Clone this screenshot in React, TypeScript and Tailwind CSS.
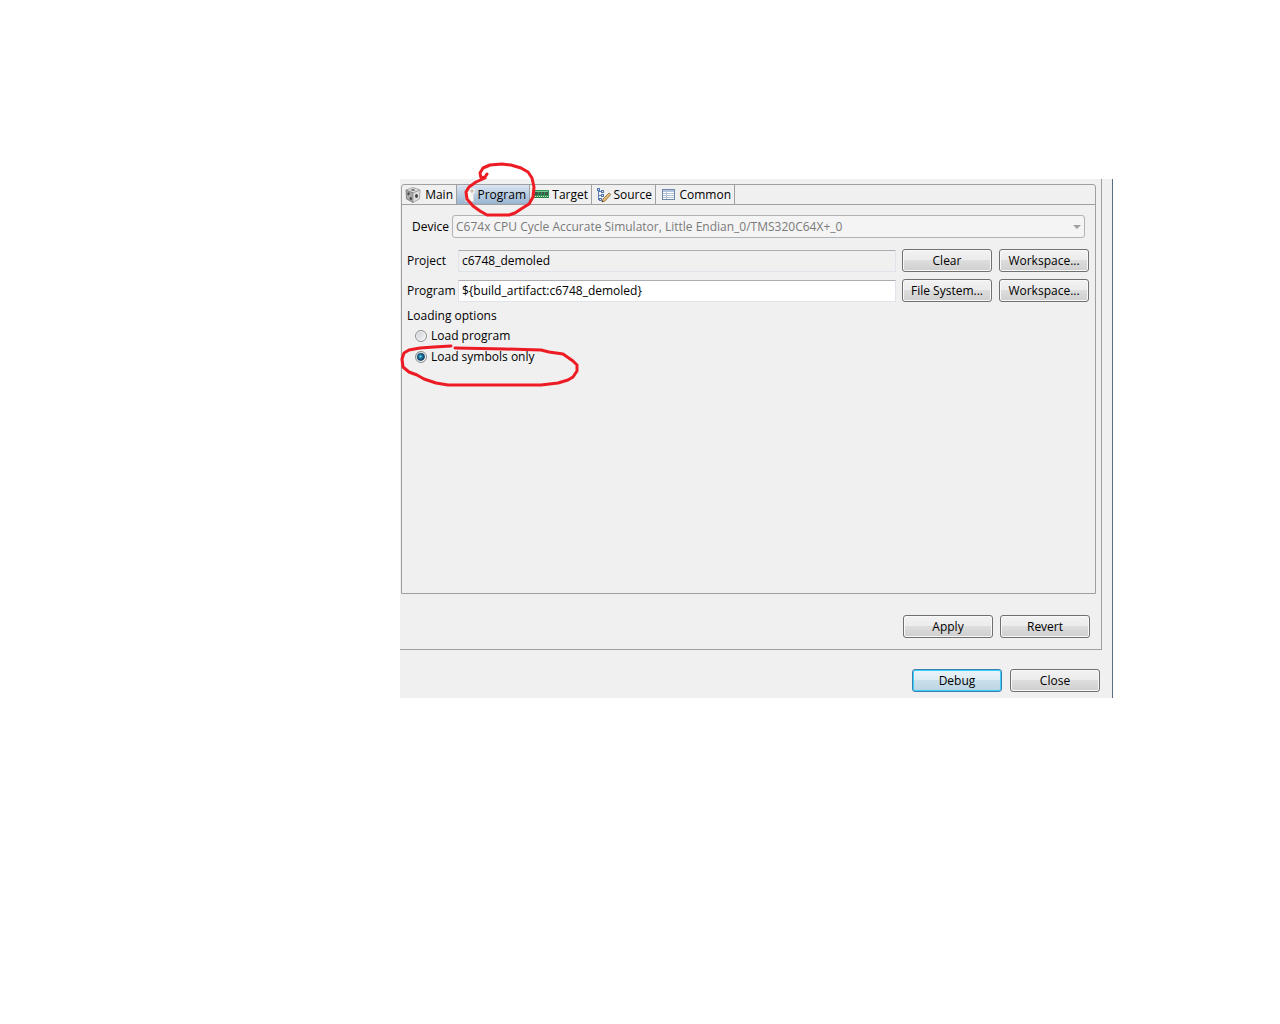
import React, { useState } from 'react';
import clsx from 'clsx';

type TabId = 'main' | 'program' | 'target' | 'source' | 'common';

interface Tab {
  id: TabId;
  label: string;
  width: string;
  icon: React.ReactNode;
}

function CubeIcon() {
  return (
    <svg width="16" height="16" viewBox="0 0 16 16" aria-hidden="true">
      <path d="M8 0.5 15 3 8 6 1 3Z" fill="#dedede" stroke="#a0a0a0" strokeWidth="0.8" />
      <path d="M1 3 8 6V15.5L1.5 12Z" fill="#a9a9a9" stroke="#777" strokeWidth="0.8" />
      <path d="M15 3 8 6V15.5L14.500 12Z" fill="#e0e0e0" stroke="#999" strokeWidth="0.8" />
      <ellipse cx="8" cy="3" rx="2" ry="1" fill="#777" />
      <ellipse cx="3.500" cy="6.800" rx="1.200" ry="1.500" fill="#4a4a4a" />
      <ellipse cx="5.800" cy="11.500" rx="1.200" ry="1.500" fill="#4a4a4a" />
      <ellipse cx="11.500" cy="9" rx="1.500" ry="2" fill="#444" />
    </svg>
  );
}

function PageIcon() {
  return (
    <svg width="16" height="16" viewBox="0 0 16 16" aria-hidden="true">
      <path d="M5.500 3.500H11L13.500 6V14.500H5.500Z" fill="#f8f7f2" stroke="#d4d6d8" />
      <path d="M12 1V7M9 4H15" stroke="#fff" strokeWidth="3" />
      <path d="M12 1.500V6.500M9.500 4H14.500" stroke="#b5ad96" />
    </svg>
  );
}

function BoardIcon() {
  return (
    <svg width="16" height="16" viewBox="0 0 16 16" shapeRendering="crispEdges" aria-hidden="true">
      <rect x="1" y="3" width="15" height="8" fill="#2f9458" />
      <rect x="2" y="4" width="13" height="1" fill="#7cc795" />
      <path d="M2 5H5V8H2ZM6 5H8V8H6ZM9 5H11V8H9ZM12 5H15V8H12Z" fill="#3c5a4c" />
      <path d="M2 9.500H15" stroke="#d8e8b8" strokeDasharray="1 1" />
      <path d="M2 10.500H15" stroke="#1c6b3c" strokeDasharray="1 1" />
    </svg>
  );
}

function SourceIcon() {
  return (
    <svg width="16" height="16" viewBox="0 0 16 16" aria-hidden="true">
      <g shapeRendering="crispEdges">
        <path d="M3.500 3V12.500H5M3.500 4.500H7M3.500 8.500H6" fill="none" stroke="#5a7db5" />
        <path d="M2 1H5V4H2ZM6 3H9V6H6ZM6 7H9V10H6ZM4 11H7V14H4Z" fill="#5577b0" />
        <path d="M3 2H4V3H3ZM7 4H8V5H7ZM7 8H8V9H7ZM5 12H6V13H5Z" fill="#dce7f7" />
      </g>
      <path d="M7 15 8 12 14 6 15.800 7.500 10 14Z" fill="#e6bd78" stroke="#8a6433" strokeWidth="0.8" />
      <path d="M7 15 7.500 13.400 8.700 14.400Z" fill="#3d2c18" />
    </svg>
  );
}

function TableIcon() {
  return (
    <svg width="16" height="16" viewBox="0 0 16 16" shapeRendering="crispEdges" aria-hidden="true">
      <rect x="3.500" y="2.500" width="12" height="10" fill="#fff" stroke="#6f87a8" />
      <rect x="4" y="3" width="11" height="2" fill="#b2c4dc" />
      <path d="M4 6.500H15M4 8.500H15M4 10.500H15" stroke="#b4c2d6" />
      <path d="M7.500 3V12" stroke="#b4c2d6" />
    </svg>
  );
}

const TABS: Tab[] = [
  { id: 'main', label: 'Main', width: 'w-[55px]', icon: <CubeIcon /> },
  { id: 'program', label: 'Program', width: 'w-[73px]', icon: <PageIcon /> },
  { id: 'target', label: 'Target', width: 'w-[62px]', icon: <BoardIcon /> },
  { id: 'source', label: 'Source', width: 'w-[64px]', icon: <SourceIcon /> },
  { id: 'common', label: 'Common', width: 'w-[79px]', icon: <TableIcon /> },
];

interface PushButtonProps {
  children: React.ReactNode;
  isDefault?: boolean;
}

function PushButton({ children, isDefault = false }: PushButtonProps) {
  return (
    <button
      type="button"
      className={clsx(
        'flex h-[23px] w-[90px] shrink-0 items-center justify-center rounded-[3px] border',
        isDefault
          ? 'border-[#3c7fb1] bg-[linear-gradient(#eaf3f8,#dcebf4_50%,#c9dfeb_50%,#bcd5e3)] shadow-[inset_0_0_0_1px_#36d0fb]'
          : 'border-[#707070] bg-[linear-gradient(#f2f2f2,#ebebeb_50%,#dddddd_50%,#cfcfcf)] shadow-[inset_0_0_0_1px_#f8f8f8]'
      )}
    >
      {children}
    </button>
  );
}

interface LoadOptionProps {
  label: string;
  checked: boolean;
  onChange: () => void;
}

function LoadOption({ label, checked, onChange }: LoadOptionProps) {
  return (
    <label className="flex h-[21px] items-center gap-1">
      <input
        type="radio"
        name="load-option"
        checked={checked}
        onChange={onChange}
        className="size-[12px] appearance-none rounded-full border border-[#8e8f8f] bg-[linear-gradient(135deg,#cbcfd5,#f6f6f6)] shadow-[inset_0_0_0_1px_#f4f4f4] checked:bg-[radial-gradient(circle_at_45%_45%,#7fd9f7_0,#1f7ea8_20%,#0b3a5a_50%,#d7dce0_62%)]"
      />
      {label}
    </label>
  );
}

// Hand-drawn marks over the selected tab and the chosen radio
function Marks() {
  return (
    <svg
      className="pointer-events-none absolute -top-[19px] left-0 h-[230px] w-[190px]"
      viewBox="400 160 190 230"
      fill="none"
      stroke="#ed1c24"
      strokeWidth="3"
      strokeLinecap="round"
      strokeLinejoin="round"
      aria-hidden="true"
    >
      <path d="M487 174 485 177 481 178 480 173 483 168 490 165 502 164 511 165 521 168 528 172 532 178 534 187 533 197 529 204 521 209 515 213 509 215 487 215 480 211 473 206 467 199 466 192 469 187 476 182 485 178" />
      <path d="M451 346 434 347 420 348 409 350 404 353 402 359 403 367 409 372 417 375 424 379 436 383 448 385 541 385 558 383 568 380 573 377 577 371 577 365 573 361 563 354 549 352 541 350 505 349 455 348" />
    </svg>
  );
}

export default function App() {
  const [activeTab, setActiveTab] = useState<TabId>('program');
  const [program, setProgram] = useState('${build_artifact:c6748_demoled}');
  const [loadMode, setLoadMode] = useState<'program' | 'symbols'>('symbols');

  return (
    <main className="min-h-screen bg-white pt-[179px] pr-[167px] pl-[400px] font-['Open_Sans',sans-serif] text-[12px] leading-4 text-black">
      <div className="relative border-r border-[#5b6d80] bg-[#f0f0f0] pb-1.5">
        <div className="mr-[10px] border-r border-b border-[#a0a0a0] pt-[5px] pb-[11px]">
          {/* Tab folder */}
          <div className="mr-[5px] ml-px rounded-t-[3px] border border-[#a0a0a0]">
            <div role="tablist" className="flex h-5 border-b border-[#a0a0a0]">
              {TABS.map(tab => (
                <button
                  key={tab.id}
                  type="button"
                  role="tab"
                  aria-selected={activeTab === tab.id}
                  onClick={() => setActiveTab(tab.id)}
                  className={clsx(
                    'flex shrink-0 items-center justify-between border-r border-[#a0a0a0] pr-[3px] pl-[3px]',
                    tab.width,
                    activeTab === tab.id && 'bg-linear-to-b from-[#dbe5f1] to-[#99b4d1]'
                  )}
                >
                  {tab.icon}
                  {tab.label}
                </button>
              ))}
            </div>

            {/* Program tab */}
            <div role="tabpanel" className="min-h-[388px] pt-2.5 pl-[5px]">
              <div className="mr-2.5 flex items-center pl-[5px]">
                <label htmlFor="device" className="w-10 shrink-0">Device</label>
                <div className="relative flex-1">
                  <select
                    id="device"
                    disabled
                    className="block h-[23px] w-full appearance-none rounded-[3px] border border-[#b0b3b5] bg-[#f4f4f4] pl-[3px] text-[#7a7a7a] opacity-100"
                  >
                    <option>C674x CPU Cycle Accurate Simulator, Little Endian_0/TMS320C64X+_0</option>
                  </select>
                  <svg className="absolute top-[10px] right-1 h-1 w-2" viewBox="0 0 8 4" aria-hidden="true">
                    <path d="M0 0H8L4 4Z" fill="#a0a0a0" />
                  </svg>
                </div>
              </div>

              <div className="mt-[11px] mr-1.5 flex items-center">
                <label htmlFor="project" className="w-[51px] shrink-0">Project</label>
                <input
                  id="project"
                  readOnly
                  value="c6748_demoled"
                  className="h-[22px] min-w-0 flex-1 border border-[#e2e3ea] border-t-[#abadb3] bg-[#f0f0f0] px-[3px]"
                />
                <div className="ml-1.5 flex gap-[7px]">
                  <PushButton>Clear</PushButton>
                  <PushButton>Workspace...</PushButton>
                </div>
              </div>

              <div className="mt-[7px] mr-1.5 flex items-center">
                <label htmlFor="program" className="w-[51px] shrink-0">Program</label>
                <input
                  id="program"
                  value={program}
                  onChange={e => setProgram(e.target.value)}
                  className="h-[22px] min-w-0 flex-1 border border-[#e2e3ea] border-t-[#abadb3] bg-white px-[3px]"
                />
                <div className="ml-1.5 flex gap-[7px]">
                  <PushButton>File System...</PushButton>
                  <PushButton>Workspace...</PushButton>
                </div>
              </div>

              <fieldset className="mt-1.5">
                <legend>Loading options</legend>
                <div className="mt-px pl-2">
                  <LoadOption
                    label="Load program"
                    checked={loadMode === 'program'}
                    onChange={() => setLoadMode('program')}
                  />
                  <LoadOption
                    label="Load symbols only"
                    checked={loadMode === 'symbols'}
                    onChange={() => setLoadMode('symbols')}
                  />
                </div>
              </fieldset>
            </div>
          </div>

          <div className="mt-[21px] mr-[11px] flex justify-end gap-[7px]">
            <PushButton>Apply</PushButton>
            <PushButton>Revert</PushButton>
          </div>
        </div>

        <div className="mt-[19px] mr-3 flex justify-end gap-2">
          <PushButton isDefault>Debug</PushButton>
          <PushButton>Close</PushButton>
        </div>

        <Marks />
      </div>
    </main>
  );
}
